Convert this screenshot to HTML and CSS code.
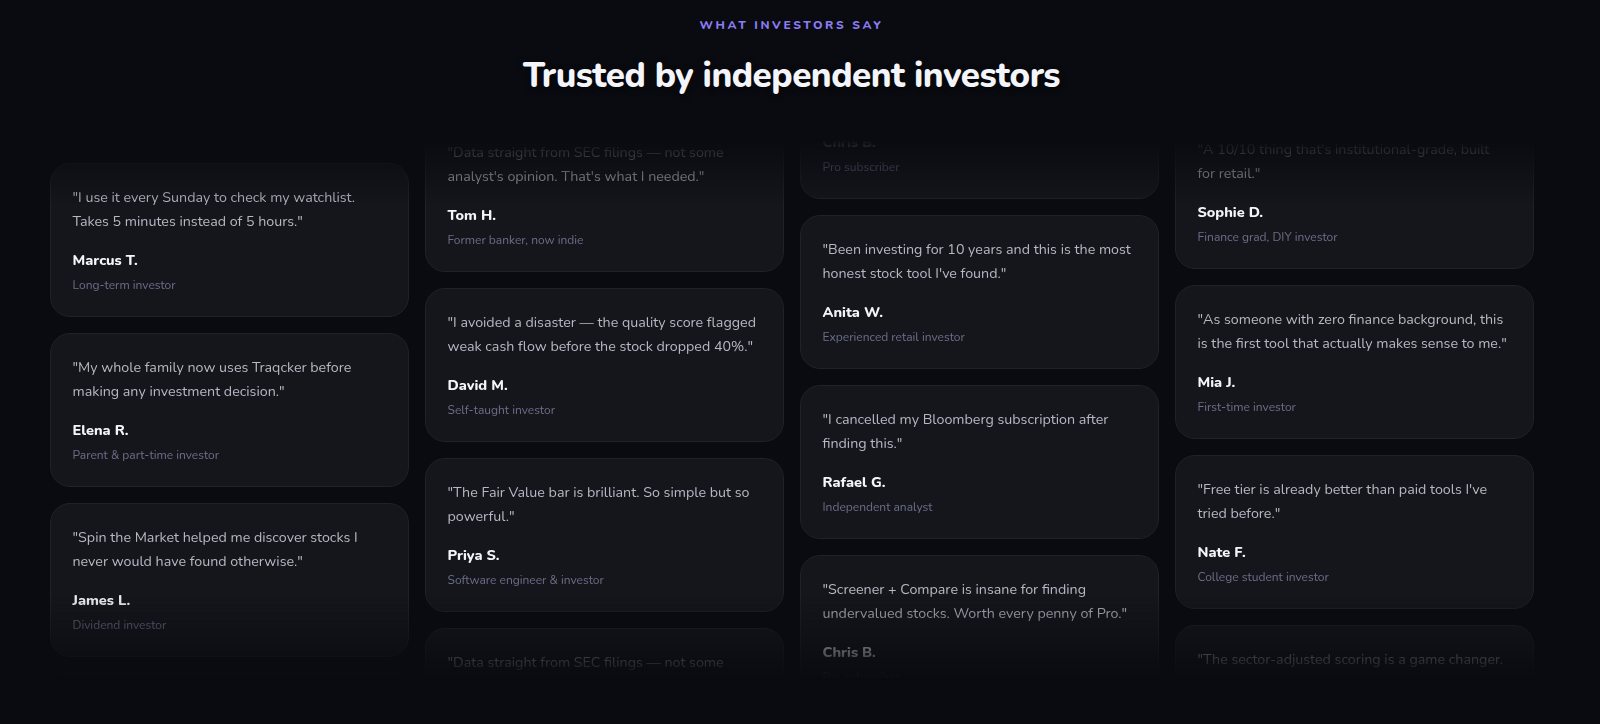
FILE: index.html
```html
<!DOCTYPE html>
<html lang="en">
<head>
<meta charset="utf-8">
<title>Trusted by independent investors</title>
<link rel="stylesheet" href="styles.css">
</head>
<body>
<section class="page">
  <header class="intro">
    <p class="eyebrow">What investors say</p>
    <h2 class="title">Trusted by independent investors</h2>
  </header>
  <div class="wall">
    <div class="col col-1">
      <article class="card"><p class="quote">"I use it every Sunday to check my watchlist. Takes 5 minutes instead of 5 hours."</p><p class="name">Marcus T.</p><p class="role">Long-term investor</p></article>
      <article class="card"><p class="quote">"My whole family now uses Traqcker before making any investment decision."</p><p class="name">Elena R.</p><p class="role">Parent &amp; part-time investor</p></article>
      <article class="card"><p class="quote">"Spin the Market helped me discover stocks I never would have found otherwise."</p><p class="name">James L.</p><p class="role">Dividend investor</p></article>
      <article class="card"><p class="quote">"I use it every Sunday to check my watchlist. Takes 5 minutes instead of 5 hours."</p><p class="name">Marcus T.</p><p class="role">Long-term investor</p></article>
    </div>
    <div class="col col-2">
      <article class="card"><p class="quote">"Data straight from SEC filings — not some analyst's opinion. That's what I needed."</p><p class="name">Tom H.</p><p class="role">Former banker, now indie</p></article>
      <article class="card"><p class="quote">"I avoided a disaster — the quality score flagged weak cash flow before the stock dropped 40%."</p><p class="name">David M.</p><p class="role">Self-taught investor</p></article>
      <article class="card"><p class="quote">"The Fair Value bar is brilliant. So simple but so powerful."</p><p class="name">Priya S.</p><p class="role">Software engineer &amp; investor</p></article>
      <article class="card"><p class="quote">"Data straight from SEC filings — not some analyst's opinion. That's what I needed."</p><p class="name">Tom H.</p><p class="role">Former banker, now indie</p></article>
    </div>
    <div class="col col-3">
      <article class="card"><p class="quote">"Screener + Compare is insane for finding undervalued stocks. Worth every penny of Pro."</p><p class="name">Chris B.</p><p class="role">Pro subscriber</p></article>
      <article class="card"><p class="quote">"Been investing for 10 years and this is the most honest stock tool I've found."</p><p class="name">Anita W.</p><p class="role">Experienced retail investor</p></article>
      <article class="card"><p class="quote">"I cancelled my Bloomberg subscription after finding this."</p><p class="name">Rafael G.</p><p class="role">Independent analyst</p></article>
      <article class="card"><p class="quote">"Screener + Compare is insane for finding undervalued stocks. Worth every penny of Pro."</p><p class="name">Chris B.</p><p class="role">Pro subscriber</p></article>
    </div>
    <div class="col col-4">
      <article class="card"><p class="quote">"A 10/10 thing that's institutional-grade, built for retail."</p><p class="name">Sophie D.</p><p class="role">Finance grad, DIY investor</p></article>
      <article class="card"><p class="quote">"As someone with zero finance background, this is the first tool that actually makes sense to me."</p><p class="name">Mia J.</p><p class="role">First-time investor</p></article>
      <article class="card"><p class="quote">"Free tier is already better than paid tools I've tried before."</p><p class="name">Nate F.</p><p class="role">College student investor</p></article>
      <article class="card"><p class="quote">"The sector-adjusted scoring is a game changer. Nothing else does this."</p><p class="name">Leo K.</p><p class="role">Growth investor</p></article>
    </div>
  </div>
</section>
</body>
</html>
```

FILE: styles.css
```css
* { box-sizing: border-box; }
html, body {
  margin: 0;
  padding: 0;
  background: #0a0b10;
  height: 100%;
  overflow: hidden;
}
body {
  font-family: "Nunito", "Lato", "Noto Sans", sans-serif;
  color: #f3f4f8;
}
.page {
  width: calc(100% - 17px);
  padding-top: 17px;
}
.intro {
  text-align: center;
}
.eyebrow {
  margin: 0;
  font-size: 12px;
  line-height: 17px;
  font-weight: 800;
  letter-spacing: 2.6px;
  text-transform: uppercase;
  color: #8b7cf4;
}
.title {
  margin: 20px 0 0;
  font-size: 35px;
  line-height: 44px;
  font-weight: 800;
  letter-spacing: -0.5px;
  color: #f4f5fa;
  text-shadow: 0 2px 6px rgba(0, 0, 0, 0.6);
}
.wall {
  margin: 42px auto 0;
  width: 1484px;
  height: 540px;
  overflow: hidden;
  display: grid;
  grid-template-columns: repeat(4, 1fr);
  column-gap: 16px;
  align-items: start;
  -webkit-mask-image: linear-gradient(to bottom, transparent 0, #000 12%, #000 84%, transparent 100%);
  mask-image: linear-gradient(to bottom, transparent 0, #000 12%, #000 84%, transparent 100%);
}
.col {
  display: flex;
  flex-direction: column;
  gap: 16px;
}
.col-1 { transform: translateY(23px); }
.col-2 { transform: translateY(-22px); }
.col-3 { transform: translateY(-95px); }
.col-4 { transform: translateY(-25px); }
.card {
  background: #15161c;
  border: 1px solid #202129;
  border-radius: 20px;
  padding: 22px;
}
.quote {
  margin: 0;
  font-size: 14.25px;
  line-height: 24px;
  color: #b6b8c3;
}
.name {
  margin: 16px 0 0;
  font-size: 14.5px;
  line-height: 20px;
  font-weight: 800;
  color: #f5f5f9;
}
.role {
  margin: 6px 0 0;
  font-size: 12px;
  line-height: 18px;
  color: #6b6e88;
}
```
